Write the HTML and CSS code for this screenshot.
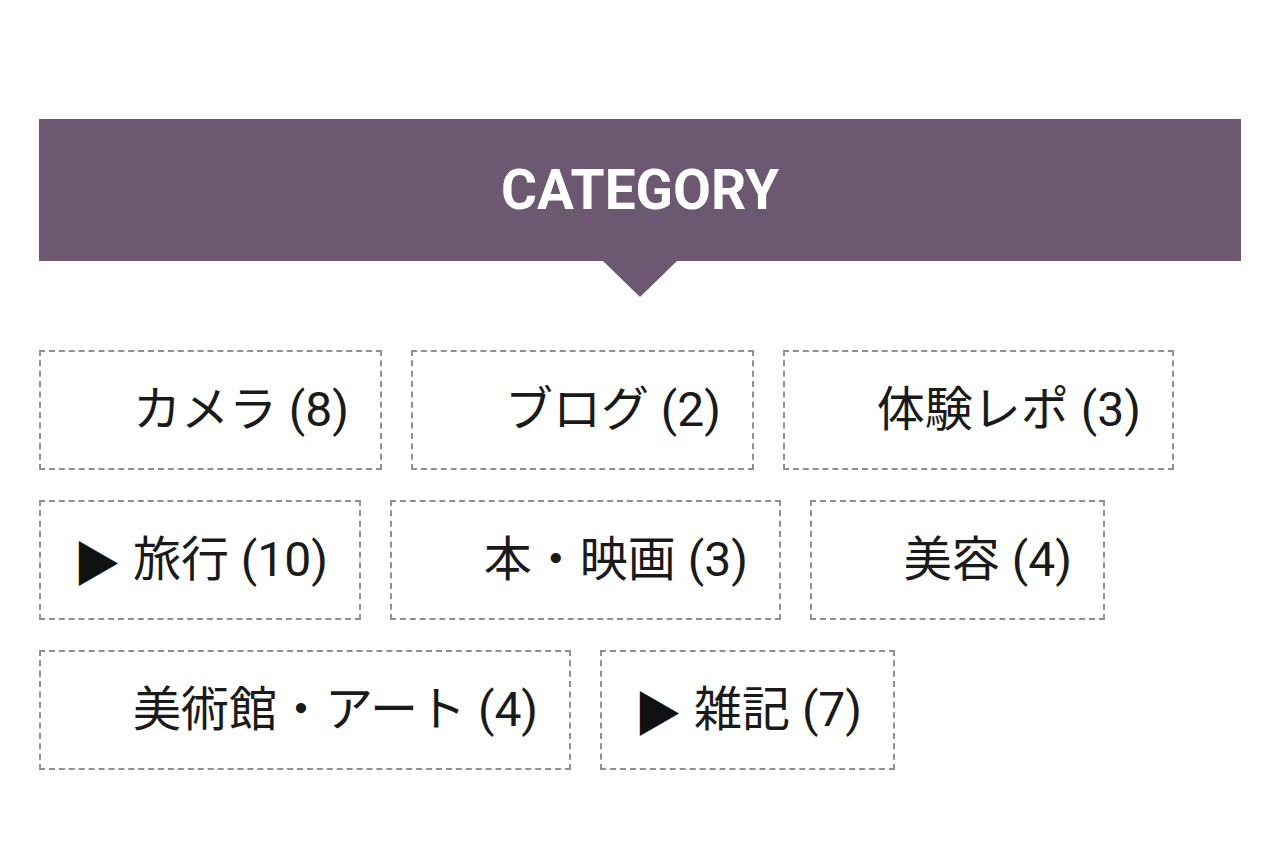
FILE: index.html
```html
<!DOCTYPE html>
<html lang="ja">
<head>
<meta charset="utf-8">
<title>CATEGORY</title>
<link rel="stylesheet" href="styles.css">
</head>
<body>
<section class="widget">
  <h2 class="widget-title">CATEGORY</h2>
  <ul class="cat-list">
    <li class="cat-item"><span class="arrow hidden">▶</span> カメラ (8)</li>
    <li class="cat-item"><span class="arrow hidden">▶</span> ブログ (2)</li>
    <li class="cat-item"><span class="arrow hidden">▶</span> 体験レポ (3)</li>
    <li class="cat-item"><span class="arrow">▶</span> 旅行 (10)</li>
    <li class="cat-item"><span class="arrow hidden">▶</span> 本・映画 (3)</li>
    <li class="cat-item"><span class="arrow hidden">▶</span> 美容 (4)</li>
    <li class="cat-item"><span class="arrow hidden">▶</span> 美術館・アート (4)</li>
    <li class="cat-item"><span class="arrow">▶</span> 雑記 (7)</li>
  </ul>
</section>
</body>
</html>
```
FILE: styles.css
```css
html, body {
  margin: 0;
  padding: 0;
  background: #ffffff;
}

body {
  font-family: Roboto, "Noto Sans CJK JP", sans-serif;
  color: #1a1a1a;
}

.widget {
  padding: 119px 39px 0 39px;
}

.widget-title {
  position: relative;
  margin: 0;
  height: 142px;
  background: #6d5871;
  color: #ffffff;
  font-family: Roboto, sans-serif;
  font-weight: 700;
  font-size: 55px;
  display: flex;
  align-items: center;
  justify-content: center;
  letter-spacing: 0;
}

.widget-title::after {
  content: "";
  position: absolute;
  left: 50%;
  bottom: -36px;
  margin-left: -37px;
  border-style: solid;
  border-width: 36px 37px 0 37px;
  border-color: #6d5871 transparent transparent transparent;
}

.cat-list {
  list-style: none;
  margin: 89px 0 0 0;
  padding: 0;
  display: flex;
  flex-wrap: wrap;
  column-gap: 29px;
  row-gap: 30px;
}

.cat-item {
  box-sizing: border-box;
  height: 120px;
  display: flex;
  align-items: center;
  white-space: pre;
  padding: 0 31px 0 32px;
  border: 2px dashed #909090;
  font-size: 48px;
  line-height: 1;
}

.arrow {
  font-family: "Noto Sans CJK JP", sans-serif;
  color: #111111;
}

.arrow.hidden {
  visibility: hidden;
}
```
